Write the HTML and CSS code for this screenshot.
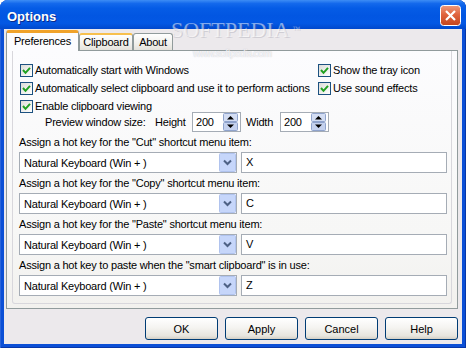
FILE: index.html
```html
<!DOCTYPE html>
<html>
<head>
<meta charset="utf-8">
<title>Options</title>
<link rel="stylesheet" href="styles.css">
</head>
<body>
<div class="window">
  <div class="titlebar">
    <span class="title">Options</span>
    <span class="close">
      <svg width="21" height="21" viewBox="0 0 21 21">
        <defs>
          <linearGradient id="cl" x1="0" y1="0" x2="0" y2="1">
            <stop offset="0" stop-color="#EE9A7C"/>
            <stop offset="0.45" stop-color="#E0643E"/>
            <stop offset="1" stop-color="#C4441C"/>
          </linearGradient>
        </defs>
        <rect x="0.5" y="0.5" width="20" height="20" rx="3" fill="url(#cl)" stroke="#fff"/>
        <path d="M6 6 L15 15 M15 6 L6 15" stroke="#fff" stroke-width="2.2"/>
      </svg>
    </span>
  </div>

  <div class="client">
    <div class="tabs">
      <div class="tab active">Preferences</div>
      <div class="tab hot">Clipboard</div>
      <div class="tab">About</div>
    </div>

    <div class="panel">
      <div class="page">
        <div class="checks">
          <label class="check"><span class="box"><svg width="11" height="11" viewBox="0 0 11 11"><path d="M2 5 L4.5 7.8 L9 2.8" fill="none" stroke="#21A121" stroke-width="2"/></svg></span>Automatically start with Windows</label>
          <label class="check"><span class="box"><svg width="11" height="11" viewBox="0 0 11 11"><path d="M2 5 L4.5 7.8 L9 2.8" fill="none" stroke="#21A121" stroke-width="2"/></svg></span>Show the tray icon</label>
          <label class="check"><span class="box"><svg width="11" height="11" viewBox="0 0 11 11"><path d="M2 5 L4.5 7.8 L9 2.8" fill="none" stroke="#21A121" stroke-width="2"/></svg></span>Automatically select clipboard and use it to perform actions</label>
          <label class="check"><span class="box"><svg width="11" height="11" viewBox="0 0 11 11"><path d="M2 5 L4.5 7.8 L9 2.8" fill="none" stroke="#21A121" stroke-width="2"/></svg></span>Use sound effects</label>
          <label class="check"><span class="box"><svg width="11" height="11" viewBox="0 0 11 11"><path d="M2 5 L4.5 7.8 L9 2.8" fill="none" stroke="#21A121" stroke-width="2"/></svg></span>Enable clipboard viewing</label>
        </div>

        <div class="preview">
          <span class="pv-label">Preview window size:</span>
          <span class="pv-height">Height</span>
          <span class="spin">
            <span class="spin-val">200</span>
            <svg class="spin-btn" width="15" height="18" viewBox="0 0 15 18">
              <rect x="0.5" y="0.5" width="14" height="8" rx="1" fill="#D3DDF3" stroke="#8FA3CC"/>
              <rect x="0.5" y="9.5" width="14" height="8" rx="1" fill="#C4D1EE" stroke="#8FA3CC"/>
              <path d="M4 6.5 L7.5 3 L11 6.5 Z" fill="#000"/>
              <path d="M4 11.5 L7.5 15 L11 11.5 Z" fill="#000"/>
            </svg>
          </span>
          <span class="pv-width">Width</span>
          <span class="spin">
            <span class="spin-val">200</span>
            <svg class="spin-btn" width="15" height="18" viewBox="0 0 15 18">
              <rect x="0.5" y="0.5" width="14" height="8" rx="1" fill="#D3DDF3" stroke="#8FA3CC"/>
              <rect x="0.5" y="9.5" width="14" height="8" rx="1" fill="#C4D1EE" stroke="#8FA3CC"/>
              <path d="M4 6.5 L7.5 3 L11 6.5 Z" fill="#000"/>
              <path d="M4 11.5 L7.5 15 L11 11.5 Z" fill="#000"/>
            </svg>
          </span>
        </div>

        <div class="hk-label">Assign a hot key for the "Cut" shortcut menu item:</div>
        <div class="hk-row">
          <div class="combo"><span class="combo-text">Natural Keyboard (Win + )</span><svg class="combo-btn" width="17" height="19" viewBox="0 0 17 19"><rect x="0.5" y="0.5" width="16" height="18" rx="1" fill="#C6D6FA" stroke="#B0C3EE"/><path d="M5 7.5 L8.5 11 L12 7.5" fill="none" stroke="#4D6185" stroke-width="2"/></svg></div>
          <div class="textbox">X</div>
        </div>

        <div class="hk-label">Assign a hot key for the "Copy" shortcut menu item:</div>
        <div class="hk-row">
          <div class="combo"><span class="combo-text">Natural Keyboard (Win + )</span><svg class="combo-btn" width="17" height="19" viewBox="0 0 17 19"><rect x="0.5" y="0.5" width="16" height="18" rx="1" fill="#C6D6FA" stroke="#B0C3EE"/><path d="M5 7.5 L8.5 11 L12 7.5" fill="none" stroke="#4D6185" stroke-width="2"/></svg></div>
          <div class="textbox">C</div>
        </div>

        <div class="hk-label">Assign a hot key for the "Paste" shortcut menu item:</div>
        <div class="hk-row">
          <div class="combo"><span class="combo-text">Natural Keyboard (Win + )</span><svg class="combo-btn" width="17" height="19" viewBox="0 0 17 19"><rect x="0.5" y="0.5" width="16" height="18" rx="1" fill="#C6D6FA" stroke="#B0C3EE"/><path d="M5 7.5 L8.5 11 L12 7.5" fill="none" stroke="#4D6185" stroke-width="2"/></svg></div>
          <div class="textbox">V</div>
        </div>

        <div class="hk-label">Assign a hot key to paste when the "smart clipboard" is in use:</div>
        <div class="hk-row">
          <div class="combo"><span class="combo-text">Natural Keyboard (Win + )</span><svg class="combo-btn" width="17" height="19" viewBox="0 0 17 19"><rect x="0.5" y="0.5" width="16" height="18" rx="1" fill="#C6D6FA" stroke="#B0C3EE"/><path d="M5 7.5 L8.5 11 L12 7.5" fill="none" stroke="#4D6185" stroke-width="2"/></svg></div>
          <div class="textbox">Z</div>
        </div>
      </div>
    </div>

    <div class="buttons">
      <button class="btn">OK</button>
      <button class="btn">Apply</button>
      <button class="btn">Cancel</button>
      <button class="btn">Help</button>
    </div>
  </div>

  <div class="watermark">SOFTPEDIA<span class="tm">™</span></div>
  <div class="watermark-url">www.softpedia.com</div>
</div>
</body>
</html>
```

FILE: styles.css
```css
html, body {
  margin: 0;
  padding: 0;
}

body {
  font-family: "Liberation Sans", Arial, sans-serif;
  font-size: 11px;
  letter-spacing: -0.2px;
  color: #000;
  background: #fff;
}

.window {
  position: relative;
  width: 466px;
  height: 348px;
  display: flex;
  flex-direction: column;
  background: #0B4FD6;
  border-radius: 8px 8px 0 0;
  overflow: hidden;
  box-shadow: inset 1px 0 0 #2A64DA, inset -1px 0 0 #0636A8, inset 0 -1px 0 #0636A8;
}

/* title bar */
.titlebar {
  flex: none;
  height: 29px;
  display: flex;
  align-items: center;
  justify-content: space-between;
  padding: 0 5px 0 7px;
  background: linear-gradient(#3D8DF5 0%, #1469EC 12%, #055CE6 28%, #0256E2 55%, #0358E4 80%, #0048CC 100%);
}

.title {
  color: #fff;
  font-weight: bold;
  font-size: 13px;
  letter-spacing: 0;
  padding-top: 3px;
  text-shadow: 1px 1px 0 #0A2A8A;
}

.close {
  display: flex;
  margin-top: 1px;
}

/* client area */
.client {
  flex: 1;
  margin: 0 4px 4px;
  padding: 1px 4px 0 2px;
  background: #ECE9EC;
  display: flex;
  flex-direction: column;
}

.tabs {
  display: flex;
  align-items: flex-end;
  height: 21px;
  position: relative;
  z-index: 1;
}

.tab {
  box-sizing: border-box;
  height: 17px;
  margin-bottom: 1px;
  border: 1px solid #919B9C;
  border-bottom: none;
  border-radius: 3px 3px 0 0;
  background: linear-gradient(#FFFFFF, #F1F0EC 60%, #E4E2DC);
  text-align: center;
  line-height: 16px;
}

.tab:nth-child(2) {
  width: 54px;
}

.tab:nth-child(3) {
  width: 40px;
}

.tab.hot {
  border-top: 2px solid #F7C04E;
  line-height: 15px;
}

.tab.active {
  width: 73px;
  height: 21px;
  margin-bottom: 0;
  border-top: 3px solid #F0A22A;
  background: #FCFCFE;
  line-height: 17px;
}

.panel {
  box-sizing: border-box;
  height: 259px;
  margin-top: -1px;
  border: 1px solid #919B9C;
  padding: 0 5px 4px;
  background: linear-gradient(#FCFCFE, #F7F7F6 70%, #F2F1EE);
  display: flex;
}

.page {
  flex: 1;
  border: 1px solid #D8D7DC;
  border-top: none;
  border-radius: 0 0 3px 3px;
  padding: 10px 0 0 6px;
}

/* checkboxes */
.checks {
  display: grid;
  grid-template-columns: 298px auto;
  grid-auto-rows: 18px;
}

.check {
  display: flex;
  align-items: center;
  gap: 2px;
  white-space: nowrap;
}

.box {
  box-sizing: border-box;
  width: 13px;
  height: 13px;
  margin-left: 1px;
  border: 1px solid #1C5180;
  background: linear-gradient(135deg, #DCDCD7, #FFFFFF);
  display: flex;
  flex: none;
}

/* preview size */
.preview {
  display: flex;
  align-items: center;
  height: 20px;
  margin-top: -3px;
  white-space: nowrap;
}

.pv-label {
  width: 110px;
  margin-left: 26px;
}

.pv-height {
  width: 37px;
}

.pv-width {
  width: 34px;
  margin-left: 5px;
}

.spin {
  box-sizing: border-box;
  width: 49px;
  height: 20px;
  border: 1px solid #A5ACB5;
  background: #fff;
  display: flex;
  align-items: center;
  justify-content: space-between;
  padding: 0 2px 0 3px;
}

/* hot keys */
.hk-label {
  height: 20px;
  line-height: 20px;
  white-space: nowrap;
}

.hk-row {
  display: flex;
  gap: 4px;
  height: 21px;
}

.combo {
  box-sizing: border-box;
  width: 218px;
  border: 1px solid #A5ACB5;
  background: #fff;
  display: flex;
  align-items: center;
  justify-content: space-between;
  padding: 0 0 0 4px;
}

.textbox {
  box-sizing: border-box;
  width: 206px;
  border: 1px solid #A5ACB5;
  background: #fff;
  padding-left: 4px;
  line-height: 19px;
}

/* dialog buttons */
.buttons {
  display: flex;
  justify-content: flex-end;
  gap: 7px;
  margin-top: 8px;
}

.btn {
  box-sizing: border-box;
  width: 73px;
  height: 23px;
  border: 1px solid #003C74;
  border-radius: 3px;
  background: linear-gradient(#FFFFFF, #F5F4F1 45%, #E7E5DE 85%, #D4CFC4);
  font-family: "Liberation Sans", Arial, sans-serif;
  font-size: 11px;
  color: #000;
  padding: 0;
}

/* watermark over the screenshot */
.watermark {
  position: absolute;
  left: 171px;
  top: 19px;
  font-family: "Liberation Serif", "Times New Roman", serif;
  font-size: 22px;
  line-height: 22px;
  letter-spacing: 0;
  color: rgba(255, 255, 255, 0.5);
  text-shadow: 1px 1px 0 rgba(110, 110, 130, 0.22);
  pointer-events: none;
}

.watermark .tm {
  font-size: 8px;
  vertical-align: top;
  margin-left: 3px;
}

.watermark-url {
  position: absolute;
  left: 193px;
  top: 49px;
  font-family: "Liberation Sans", Arial, sans-serif;
  font-weight: bold;
  font-size: 10px;
  line-height: 10px;
  letter-spacing: -0.9px;
  color: rgba(255, 255, 255, 0.7);
  text-shadow: 0 0 1px rgba(140, 140, 155, 0.45);
  pointer-events: none;
}
```
